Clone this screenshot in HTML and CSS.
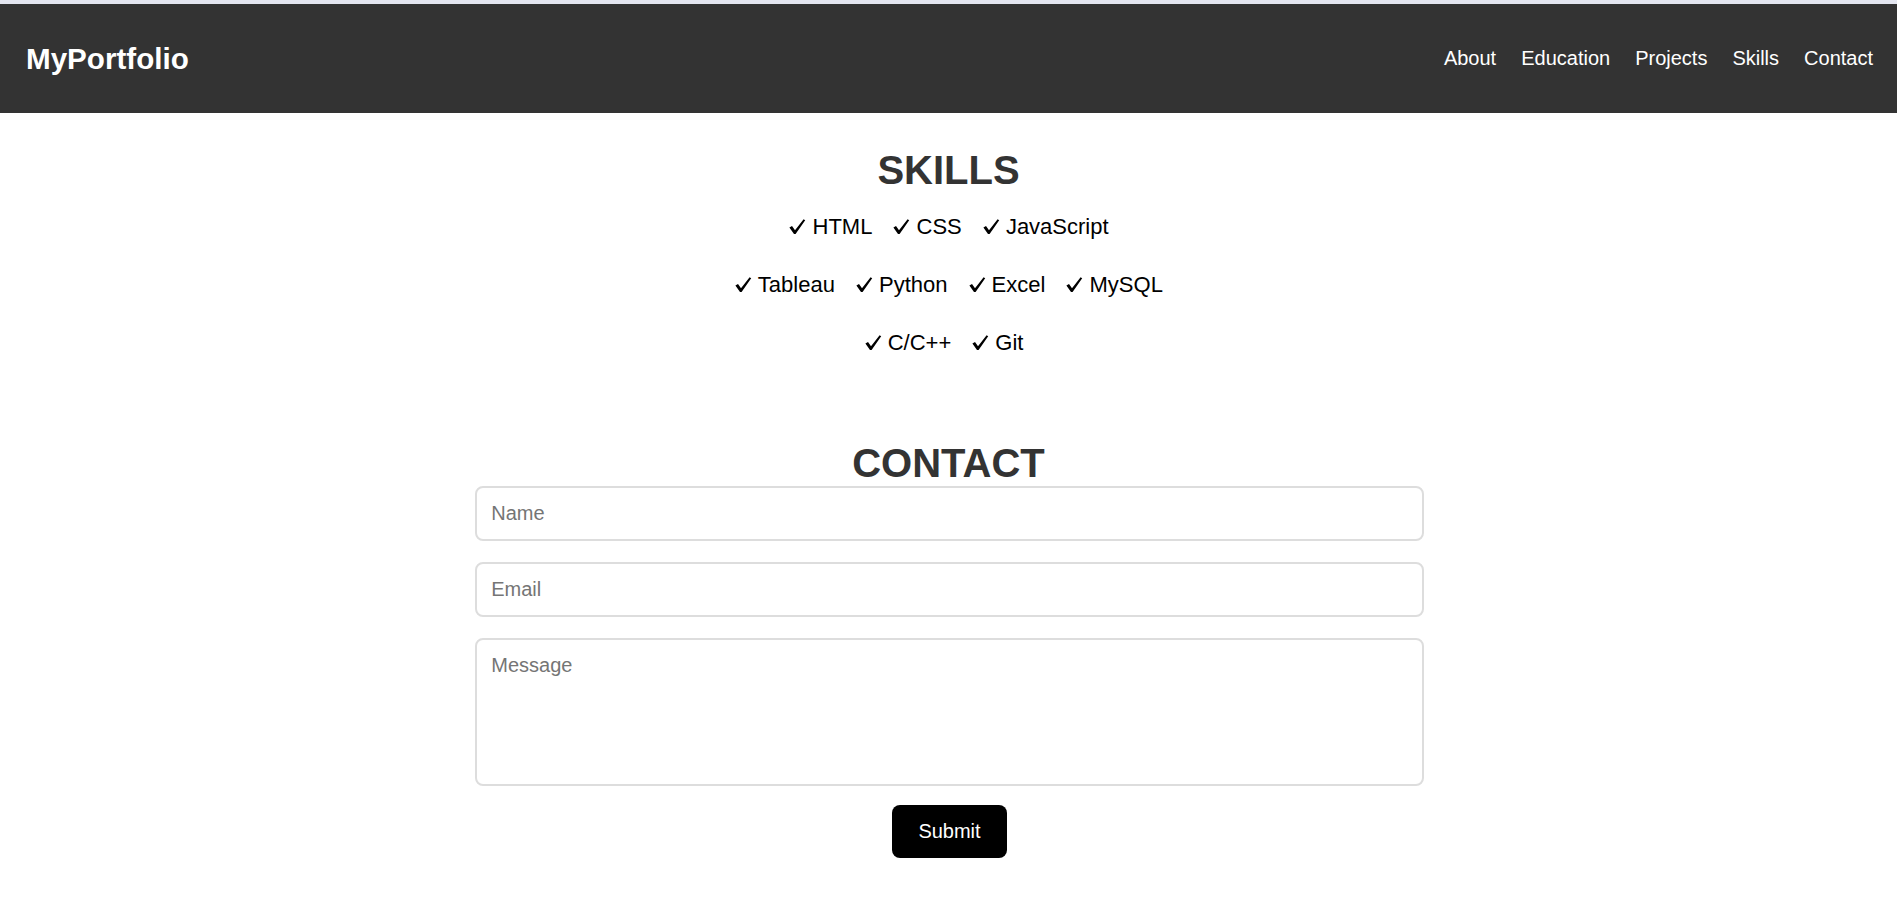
FILE: index.html
```html
<!DOCTYPE html>
<html lang="en">
<head>
<meta charset="utf-8">
<title>MyPortfolio</title>
<link rel="stylesheet" href="styles.css">
</head>
<body>
<header class="site-header">
  <div class="logo">MyPortfolio</div>
  <nav class="nav">
    <a href="#about">About</a>
    <a href="#education">Education</a>
    <a href="#projects">Projects</a>
    <a href="#skills">Skills</a>
    <a href="#contact">Contact</a>
  </nav>
</header>
<main>
  <section class="skills" id="skills">
    <h2 class="section-title">SKILLS</h2>
    <ul class="skill-list">
      <li><svg class="check" viewBox="0 0 18 15" aria-hidden="true"><path d="M1.4 8.6 L4 7.1 L7 11.2 L15.6 0.2 L17.2 1.3 L7.6 15 L6 15 Z"/></svg> HTML</li>
      <li><svg class="check" viewBox="0 0 18 15" aria-hidden="true"><path d="M1.4 8.6 L4 7.1 L7 11.2 L15.6 0.2 L17.2 1.3 L7.6 15 L6 15 Z"/></svg> CSS</li>
      <li><svg class="check" viewBox="0 0 18 15" aria-hidden="true"><path d="M1.4 8.6 L4 7.1 L7 11.2 L15.6 0.2 L17.2 1.3 L7.6 15 L6 15 Z"/></svg> JavaScript</li>
      <li><svg class="check" viewBox="0 0 18 15" aria-hidden="true"><path d="M1.4 8.6 L4 7.1 L7 11.2 L15.6 0.2 L17.2 1.3 L7.6 15 L6 15 Z"/></svg> Tableau</li>
      <li><svg class="check" viewBox="0 0 18 15" aria-hidden="true"><path d="M1.4 8.6 L4 7.1 L7 11.2 L15.6 0.2 L17.2 1.3 L7.6 15 L6 15 Z"/></svg> Python</li>
      <li><svg class="check" viewBox="0 0 18 15" aria-hidden="true"><path d="M1.4 8.6 L4 7.1 L7 11.2 L15.6 0.2 L17.2 1.3 L7.6 15 L6 15 Z"/></svg> Excel</li>
      <li><svg class="check" viewBox="0 0 18 15" aria-hidden="true"><path d="M1.4 8.6 L4 7.1 L7 11.2 L15.6 0.2 L17.2 1.3 L7.6 15 L6 15 Z"/></svg> MySQL</li>
      <li><svg class="check" viewBox="0 0 18 15" aria-hidden="true"><path d="M1.4 8.6 L4 7.1 L7 11.2 L15.6 0.2 L17.2 1.3 L7.6 15 L6 15 Z"/></svg> C/C++</li>
      <li><svg class="check" viewBox="0 0 18 15" aria-hidden="true"><path d="M1.4 8.6 L4 7.1 L7 11.2 L15.6 0.2 L17.2 1.3 L7.6 15 L6 15 Z"/></svg> Git</li>
    </ul>
  </section>
  <section class="contact" id="contact">
    <h2 class="section-title">CONTACT</h2>
    <form class="contact-form">
      <input class="field" type="text" placeholder="Name">
      <input class="field" type="email" placeholder="Email">
      <textarea class="field message" rows="5" placeholder="Message"></textarea>
      <button class="submit" type="submit">Submit</button>
    </form>
  </section>
</main>
</body>
</html>
```
FILE: styles.css
```css
html, body {
  margin: 0;
  padding: 0;
}
body {
  border-top: 4px solid #e4e6f0;
  background: #fff;
  font-family: "Liberation Sans", Arial, sans-serif;
  color: #000;
}
.site-header {
  background: #333;
  height: 109px;
  padding: 0 24px 0 26px;
  display: flex;
  align-items: center;
  justify-content: space-between;
  box-sizing: border-box;
}
.logo {
  color: #fff;
  font-weight: bold;
  font-size: 29.6px;
}
.nav {
  display: flex;
  gap: 25px;
}
.nav a {
  color: #fff;
  text-decoration: none;
  font-size: 20px;
}
.section-title {
  margin: 0;
  text-align: center;
  font-size: 40px;
  font-weight: bold;
  color: #333;
  line-height: 46px;
}
.skills {
  padding-top: 34px;
}
.skill-list {
  list-style: none;
  margin: 21px auto 0;
  padding: 0;
  width: 455px;
  display: flex;
  flex-wrap: wrap;
  justify-content: center;
  row-gap: 33px;
  column-gap: 0;
}
.skill-list li {
  font-size: 22px;
  line-height: 25px;
  height: 25px;
  margin: 0 10px;
  white-space: nowrap;
}
.skill-list li:last-child {
  margin-right: 20px;
}
.check {
  width: 18px;
  height: 15px;
  vertical-align: baseline;
  fill: #000;
}
.contact {
  padding-top: 85px;
}
.contact-form {
  width: 50%;
  margin: 0 auto;
  display: flex;
  flex-direction: column;
  align-items: center;
  padding-left: 2px;
}
.field {
  display: block;
  width: 100%;
  box-sizing: border-box;
  border: 2px solid #ddd;
  border-radius: 8px;
  padding: 14px;
  font-family: "Liberation Sans", Arial, sans-serif;
  font-size: 20px;
  line-height: 23px;
  margin: 0 0 21px;
  resize: none;
  outline: none;
}
.field::placeholder {
  color: #757575;
}
.message {
  height: 148px;
  margin-bottom: 19px;
}
.submit {
  background: #000;
  color: #fff;
  border: none;
  border-radius: 8px;
  padding: 15px 26px;
  font-family: "Liberation Sans", Arial, sans-serif;
  font-size: 20px;
  line-height: 23px;
  cursor: pointer;
}
```
